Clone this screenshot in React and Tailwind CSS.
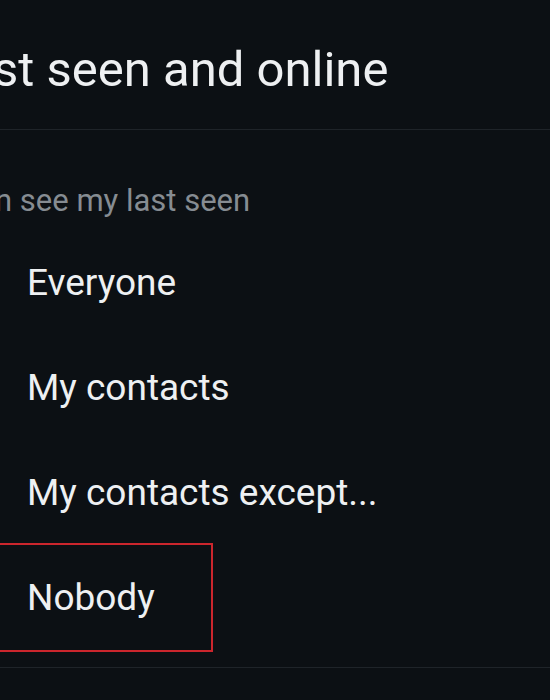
export default function App() {
  const options = ["Everyone", "My contacts", "My contacts except..."];

  return (
    <div className="w-[550px] h-[700px] overflow-hidden bg-[#0c1014] text-[#eef0f2] font-['Roboto',sans-serif]">
      {/* HEADER */}
      <div className="h-[130px] flex items-center border-b border-[#1f2429]">
        <h1 className="-ml-[60px] text-[49px] whitespace-nowrap leading-none pt-[10px]">
          Last seen and online
        </h1>
      </div>

      {/* SECTION LABEL */}
      <div className="h-[100px] flex items-center pt-[40px]">
        <p className="-ml-[108px] text-[31px] text-[#868c92] whitespace-nowrap leading-none">
          Who can see my last seen
        </p>
      </div>

      {/* OPTIONS */}
      {options.map((label) => (
        <div key={label} className="h-[105px] flex items-center">
          <span className="ml-[27px] text-[37px] leading-none whitespace-nowrap">
            {label}
          </span>
        </div>
      ))}

      {/* HIGHLIGHTED OPTION */}
      <div className="-ml-[4px] -mt-[2px] w-[217px] border-2 border-[#cc262d]">
        <div className="h-[105px] flex items-center">
          <span className="ml-[29px] text-[37px] leading-none whitespace-nowrap">
            Nobody
          </span>
        </div>
      </div>

      <div className="mt-[15px] border-t border-[#1f2429]" />
    </div>
  );
}
